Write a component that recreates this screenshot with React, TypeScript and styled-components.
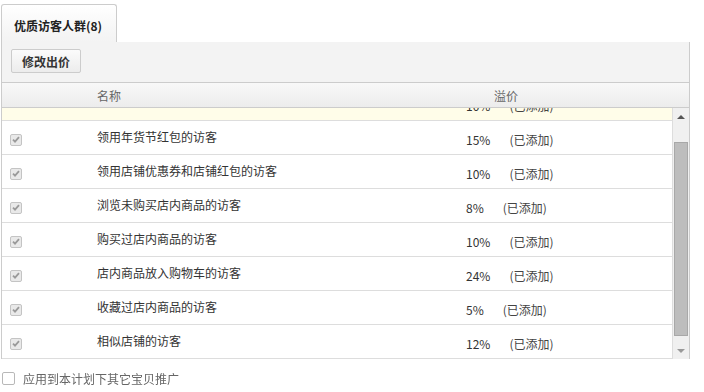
import { useEffect, useRef } from 'react'
import styled, { createGlobalStyle } from 'styled-components'

const GlobalStyle = createGlobalStyle`
  html, body {
    margin: 0;
    padding: 0;
    background: #fff;
  }
  body {
    font-family: "Noto Sans CJK SC", "Noto Sans", sans-serif;
    font-size: 12px;
    color: #333;
  }
`

const Page = styled.div`
  padding: 4px 0 0 1px;
  width: 689px;
`

const Tab = styled.div`
  box-sizing: border-box;
  width: 116px;
  height: 38px;
  border: 1px solid #ccc;
  border-bottom: none;
  border-radius: 3px 3px 0 0;
  background: linear-gradient(#fff, #f6f6f6 70%, #f3f3f3);
  display: flex;
  align-items: center;
  padding: 3px 0 0 12px;
  font-weight: bold;
  font-size: 12px;
  color: #222;
`

const Panel = styled.div`
  border-left: 1px solid #ccc;
  border-right: 1px solid #ccc;
`

const Toolbar = styled.div`
  height: 41px;
  background: #f3f3f3;
  border-bottom: 1px solid #ccc;
  display: flex;
  align-items: center;
  padding-left: 9px;
  box-sizing: border-box;
`

const Button = styled.button`
  width: 70px;
  height: 24px;
  border: 1px solid #ccc;
  border-radius: 2px;
  background: linear-gradient(#fbfbfb, #ececec);
  font-family: inherit;
  font-size: 12px;
  font-weight: bold;
  color: #333;
  padding: 0;
  margin-top: -2px;
`

const HeaderRow = styled.div`
  display: grid;
  grid-template-columns: 95px 397px 1fr;
  height: 24px;
  align-items: center;
  background: linear-gradient(#f8f8f8, #ececec);
  border-bottom: 1px solid #ccc;
  color: #666;
`

const Body = styled.div`
  display: flex;
  height: 251px;
`

const Scroller = styled.div`
  flex: 1;
  overflow-y: auto;
  scrollbar-width: none;
  border-right: 1px solid #ddd;
  &::-webkit-scrollbar {
    display: none;
  }
`

const Row = styled.div<{ $highlight?: boolean }>`
  display: grid;
  grid-template-columns: 95px 370px 1fr;
  height: 34px;
  box-sizing: border-box;
  border-bottom: 1px solid #ddd;
  background: ${p => (p.$highlight ? '#fffde9' : '#fff')};
  align-items: center;
`

const CheckCell = styled.div`
  padding-left: 8px;
  align-self: start;
  padding-top: 8px;
`

const Check = styled.span<{ $checked?: boolean; $size?: number }>`
  display: inline-flex;
  align-items: center;
  justify-content: center;
  flex: none;
  width: ${p => p.$size ?? 12}px;
  height: ${p => p.$size ?? 12}px;
  box-sizing: border-box;
  border: 1px solid ${p => (p.$checked ? '#c4c4c4' : '#b8b8b8')};
  border-radius: 2px;
  background: ${p => (p.$checked ? '#e9e9e9' : '#fff')};
`

const NameCell = styled.div`
  color: #333;
  margin-top: -3px;
`

const PriceCell = styled.div`
  display: flex;
  color: #333;
  margin-top: 3px;
  margin-left: -1px;
`

const Percent = styled.span``

const Added = styled.span`
  margin-left: 19px;
  color: #444;
`

const ScrollTrack = styled.div`
  width: 16px;
  background: #f0f0f0;
  display: flex;
  flex-direction: column;
  align-items: center;
`

const Arrow = styled.div<{ $down?: boolean; $color: string }>`
  width: 0;
  height: 0;
  border-left: 4px solid transparent;
  border-right: 4px solid transparent;
  ${p =>
    p.$down
      ? `border-top: 4px solid ${p.$color};`
      : `border-bottom: 4px solid ${p.$color};`}
`

const ArrowBox = styled.div`
  height: 17px;
  display: flex;
  align-items: center;
  justify-content: center;
`

const Thumb = styled.div`
  width: 14px;
  flex: 1;
  margin: 17px 0 6px;
  box-sizing: border-box;
  background: #bdbdbd;
  border: 1px solid #a8a8a8;
`

const Footer = styled.label`
  display: flex;
  align-items: center;
  gap: 8px;
  height: 13px;
  line-height: 13px;
  margin-top: 13px;
  margin-left: 1px;
  color: #666;
`

const rows = [
  { name: '', percent: '10%', highlight: true },
  { name: '领用年货节红包的访客', percent: '15%' },
  { name: '领用店铺优惠券和店铺红包的访客', percent: '10%' },
  { name: '浏览未购买店内商品的访客', percent: '8%' },
  { name: '购买过店内商品的访客', percent: '10%' },
  { name: '店内商品放入购物车的访客', percent: '24%' },
  { name: '收藏过店内商品的访客', percent: '5%' },
  { name: '相似店铺的访客', percent: '12%' },
]

const CheckMark = () => (
  <svg width="8" height="7" viewBox="0 0 8 7">
    <path d="M1 3.6 L3 5.6 L7 1.2" fill="none" stroke="#9a9a9a" strokeWidth="1.8" />
  </svg>
)

export default function App() {
  const scrollRef = useRef<HTMLDivElement>(null)

  useEffect(() => {
    if (scrollRef.current) scrollRef.current.scrollTop = 21
  }, [])

  return (
    <Page>
      <GlobalStyle />
      <Tab>优质访客人群(8)</Tab>
      <Panel>
        <Toolbar>
          <Button>修改出价</Button>
        </Toolbar>
        <HeaderRow>
          <span />
          <span>名称</span>
          <span>溢价</span>
        </HeaderRow>
        <Body>
          <Scroller ref={scrollRef}>
            {rows.map((r, i) => (
              <Row key={i} $highlight={r.highlight}>
                <CheckCell>
                  {!r.highlight && (
                    <Check $checked>
                      <CheckMark />
                    </Check>
                  )}
                </CheckCell>
                <NameCell>{r.name}</NameCell>
                <PriceCell>
                  <Percent>{r.percent}</Percent>
                  <Added>(已添加)</Added>
                </PriceCell>
              </Row>
            ))}
          </Scroller>
          <ScrollTrack>
            <ArrowBox>
              <Arrow $color="#555" />
            </ArrowBox>
            <Thumb />
            <ArrowBox>
              <Arrow $down $color="#999" />
            </ArrowBox>
          </ScrollTrack>
        </Body>
      </Panel>
      <Footer>
        <Check $size={13} />
        应用到本计划下其它宝贝推广
      </Footer>
    </Page>
  )
}
